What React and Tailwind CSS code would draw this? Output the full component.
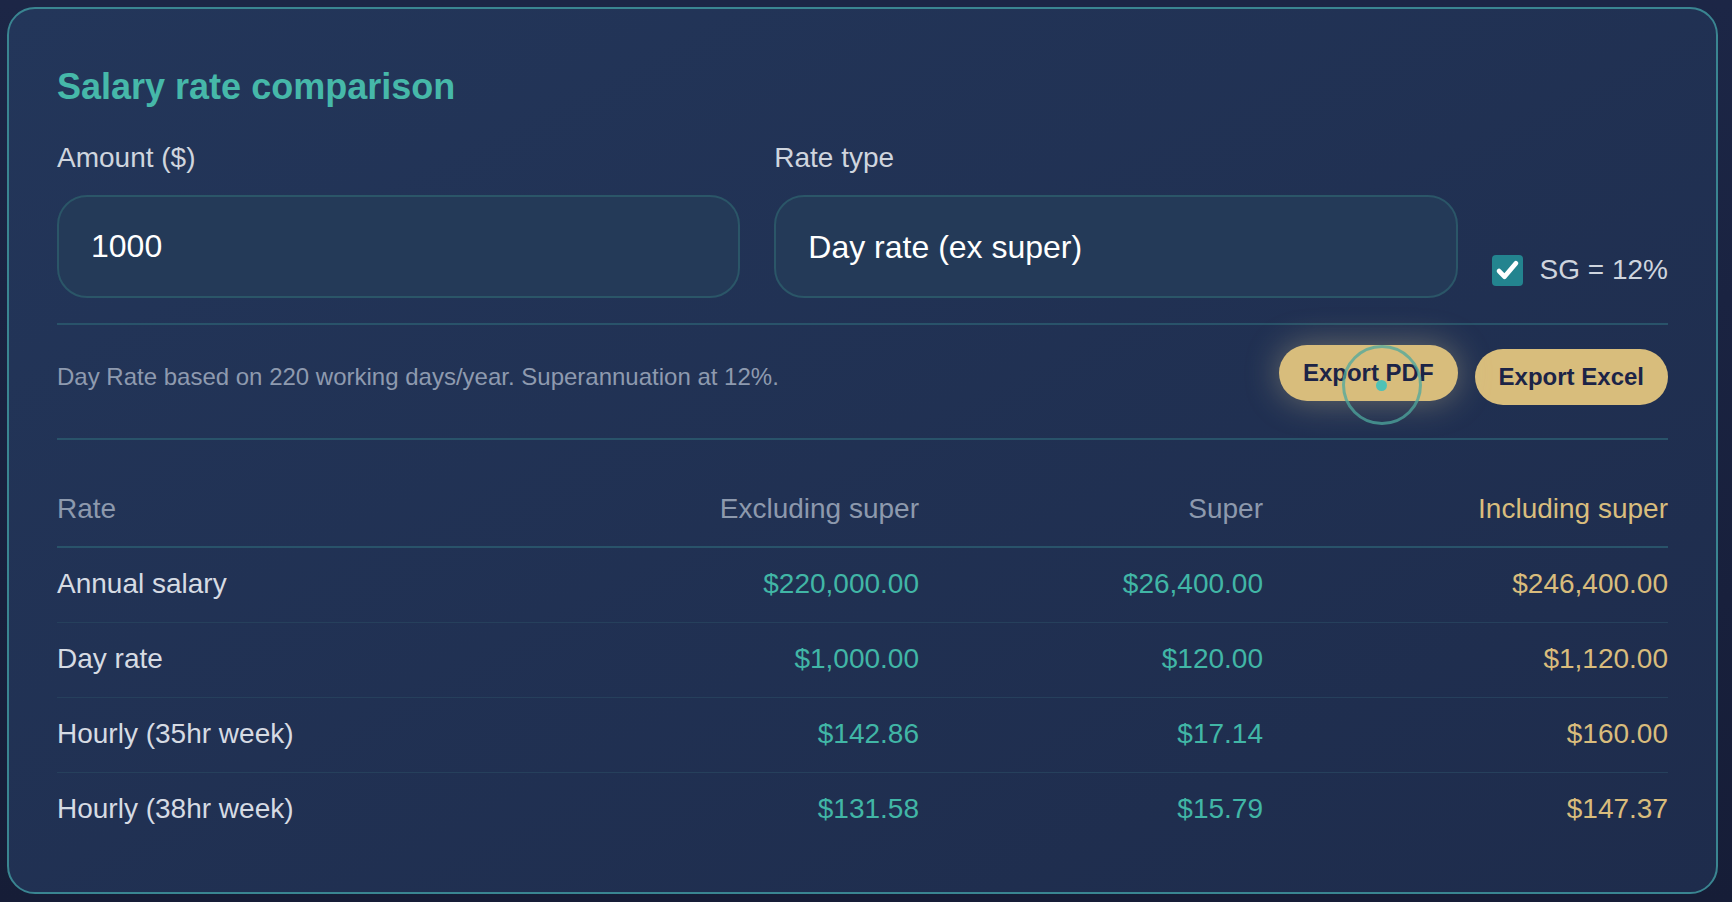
import { useState } from "react";

const rows = [
  { label: "Annual salary", ex: "$220,000.00", sup: "$26,400.00", inc: "$246,400.00" },
  { label: "Day rate", ex: "$1,000.00", sup: "$120.00", inc: "$1,120.00" },
  { label: "Hourly (35hr week)", ex: "$142.86", sup: "$17.14", inc: "$160.00" },
  { label: "Hourly (38hr week)", ex: "$131.58", sup: "$15.79", inc: "$147.37" },
];

export default function App() {
  const [amount, setAmount] = useState("1000");
  const [rateType, setRateType] = useState("day");
  const [withSg, setWithSg] = useState(true);

  return (
    <div className="min-h-screen bg-gradient-to-b from-[#1c2646] to-[#161d37] pt-[7px] pl-[7px] font-['Liberation_Sans',Arial,sans-serif]">
      <section className="w-[1711px] rounded-[28px] border-2 border-[#3a8591] bg-gradient-to-br from-[#23365a] to-[#1e2c4c] px-[48px] pt-[51px] pb-[45px]">
        <h2 className="text-[36px] leading-[54px] font-bold text-[#46b8a9]">Salary rate comparison</h2>

        {/* Inputs */}
        <div className="mt-[23px] grid grid-cols-[1fr_1fr_auto] items-end gap-x-[34px]">
          <label className="flex flex-col gap-[16px]">
            <span className="text-[28px] leading-[42px] text-[#cfd5de]">Amount ($)</span>
            <input
              value={amount}
              onChange={(e) => setAmount(e.target.value)}
              className="h-[103px] w-full rounded-[30px] border-2 border-[#2b5668] bg-[#243a58] px-[32px] text-[32px] text-white outline-none"
            />
          </label>
          <label className="flex flex-col gap-[16px]">
            <span className="text-[28px] leading-[42px] text-[#cfd5de]">Rate type</span>
            <select
              value={rateType}
              onChange={(e) => setRateType(e.target.value)}
              className="h-[103px] w-full appearance-none rounded-[30px] border-2 border-[#2b5668] bg-[#243a58] px-[32px] text-[32px] text-white outline-none"
            >
              <option value="day">Day rate (ex super)</option>
              <option value="annual">Annual salary (ex super)</option>
              <option value="hourly">Hourly rate (ex super)</option>
            </select>
          </label>
          <label className="mb-[7px] flex h-[42px] cursor-pointer items-center gap-[17px]">
            <button
              type="button"
              onClick={() => setWithSg(!withSg)}
              className="flex h-[31px] w-[31px] items-center justify-center rounded-[4px] bg-[#23848f]"
            >
              {withSg && (
                <svg width="27" height="27" viewBox="0 0 24 24" fill="none">
                  <path d="M4.5 12.5l4.8 5L19.5 5.5" stroke="#fff" strokeWidth="4.2" strokeLinecap="round" strokeLinejoin="round" />
                </svg>
              )}
            </button>
            <span className="text-[28px] leading-[42px] text-[#cfd5de]">SG = 12%</span>
          </label>
        </div>

        <div className="mt-[25px] h-[2px] bg-[#29536a]" />

        {/* Note + export actions */}
        <div className="flex items-center justify-between pt-[24px] pb-[33px]">
          <p className="text-[24px] leading-[36px] text-[#8e9aaf]">
            Day Rate based on 220 working days/year. Superannuation at 12%.
          </p>
          <div className="flex items-center gap-[17px]">
            <button className="relative h-[56px] -translate-y-1 rounded-full bg-[#d8bd7c] px-[24px] text-[24px] font-bold text-[#1c2447] shadow-[0_0_34px_rgba(232,210,150,0.38)]">
              Export PDF
              <span className="pointer-events-none absolute left-[63px] top-0 flex h-[80px] w-[80px] items-center justify-center rounded-full border-[3px] border-[#4ea89e]/75">
                <span className="h-[11px] w-[11px] rounded-full bg-[#4fc2b6]" />
              </span>
            </button>
            <button className="h-[56px] rounded-full bg-[#d8bd7c] px-[24px] text-[24px] font-bold text-[#1c2447]">
              Export Excel
            </button>
          </div>
        </div>

        <div className="h-[2px] bg-[#29536a]" />

        {/* Rates table */}
        <div className="mt-[33px]">
          <div className="grid grid-cols-[1fr_343px_344px_405px] border-b-2 border-[#29536a] pt-[15px] pb-[16px] text-[28px] leading-[42px]">
            <div className="text-[#8d99ad]">Rate</div>
            <div className="text-right text-[#8d99ad]">Excluding super</div>
            <div className="text-right text-[#8d99ad]">Super</div>
            <div className="text-right text-[#d9bd7d]">Including super</div>
          </div>
          {rows.map((r, i) => (
            <div
              key={r.label}
              className={`grid grid-cols-[1fr_343px_344px_405px] pt-[15px] pb-[17px] text-[28px] leading-[42px] ${
                i < rows.length - 1 ? "border-b border-[#26405c]" : ""
              }`}
            >
              <div className="text-[#d6dbe3]">{r.label}</div>
              <div className="text-right text-[#41b6a6]">{r.ex}</div>
              <div className="text-right text-[#41b6a6]">{r.sup}</div>
              <div className="text-right text-[#d9bc7c]">{r.inc}</div>
            </div>
          ))}
        </div>
      </section>
    </div>
  );
}
